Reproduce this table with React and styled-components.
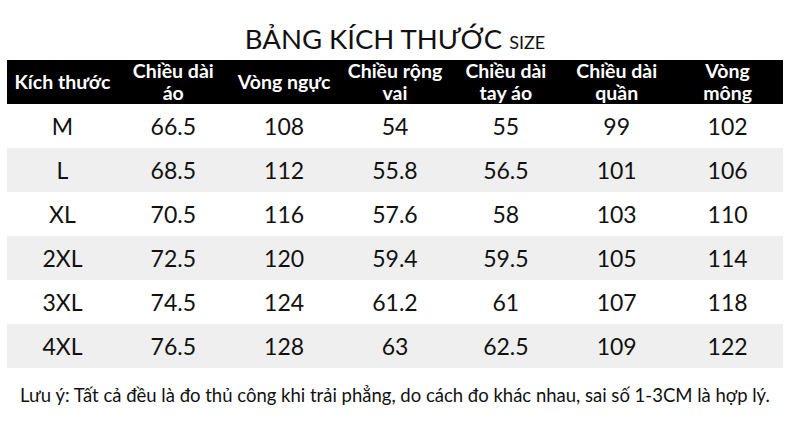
import React from "react";
import styled, { createGlobalStyle } from "styled-components";

const GlobalStyle = createGlobalStyle`
  html, body {
    margin: 0;
    padding: 0;
    background: #ffffff;
  }
  body {
    font-family: Lato, "Open Sans", sans-serif;
    color: #111111;
  }
`;

const StyledPage = styled.div`
  width: 790px;
  height: 422px;
  box-sizing: border-box;
  padding: 20px 7px 0 7px;
  display: flex;
  flex-direction: column;
`;

const StyledTitle = styled.h1`
  margin: 0;
  height: 40px;
  text-align: center;
  font-weight: 400;
  font-size: 27.5px;
  line-height: 38px;
  color: #111111;

  small {
    font-size: 18px;
    margin-left: 7px;
  }
`;

const StyledTable = styled.div`
  display: grid;
  grid-template-columns: repeat(7, 1fr);
  width: 776px;
`;

const StyledHeadCell = styled.div`
  background-color: #000000;
  color: #ffffff;
  height: 44px;
  display: flex;
  align-items: center;
  justify-content: center;
  text-align: center;
  font-weight: 700;
  font-size: 19.5px;
  line-height: 22px;
`;

const StyledCell = styled.div`
  height: 44px;
  display: flex;
  align-items: center;
  justify-content: center;
  font-size: 23px;
  background-color: ${(props) => (props.$shaded ? "#efefef" : "#ffffff")};
`;

const StyledNote = styled.p`
  margin: 16px 0 0 0;
  text-align: center;
  font-size: 18.5px;
  color: #111111;
`;

const headers = [
  ["Kích thước"],
  ["Chiều dài", "áo"],
  ["Vòng ngực"],
  ["Chiều rộng", "vai"],
  ["Chiều dài", "tay áo"],
  ["Chiều dài", "quần"],
  ["Vòng", "mông"],
];

const rows = [
  ["M", "66.5", "108", "54", "55", "99", "102"],
  ["L", "68.5", "112", "55.8", "56.5", "101", "106"],
  ["XL", "70.5", "116", "57.6", "58", "103", "110"],
  ["2XL", "72.5", "120", "59.4", "59.5", "105", "114"],
  ["3XL", "74.5", "124", "61.2", "61", "107", "118"],
  ["4XL", "76.5", "128", "63", "62.5", "109", "122"],
];

const App = () => {
  return (
    <StyledPage>
      <GlobalStyle />
      <StyledTitle>
        BẢNG KÍCH THƯỚC<small>SIZE</small>
      </StyledTitle>
      <StyledTable>
        {headers.map((lines, index) => (
          <StyledHeadCell key={index}>
            <span>
              {lines.map((line, i) => (
                <React.Fragment key={i}>
                  {i > 0 && <br />}
                  {line}
                </React.Fragment>
              ))}
            </span>
          </StyledHeadCell>
        ))}
        {rows.map((row, rowIndex) =>
          row.map((value, colIndex) => (
            <StyledCell key={rowIndex + "-" + colIndex} $shaded={rowIndex % 2 === 1}>
              {value}
            </StyledCell>
          ))
        )}
      </StyledTable>
      <StyledNote>
        Lưu ý: Tất cả đều là đo thủ công khi trải phẳng, do cách đo khác nhau, sai số 1-3CM là hợp lý.
      </StyledNote>
    </StyledPage>
  );
};

export default App;
